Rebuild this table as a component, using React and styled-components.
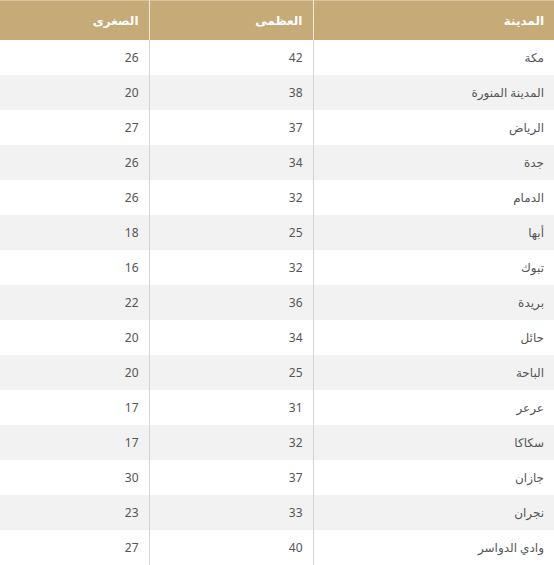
import React from "react";
import styled, { createGlobalStyle } from "styled-components";

const GlobalStyle = createGlobalStyle`
  html, body {
    margin: 0;
    padding: 0;
    background: #ffffff;
  }
  body {
    font-family: "Noto Sans", "DejaVu Sans", sans-serif;
  }
`;

const rows = [
  ["مكة", 42, 26],
  ["المدينة المنورة", 38, 20],
  ["الرياض", 37, 27],
  ["جدة", 34, 26],
  ["الدمام", 32, 26],
  ["أبها", 25, 18],
  ["تبوك", 32, 16],
  ["بريدة", 36, 22],
  ["حائل", 34, 20],
  ["الباحة", 25, 20],
  ["عرعر", 31, 17],
  ["سكاكا", 32, 17],
  ["جازان", 37, 30],
  ["نجران", 33, 23],
  ["وادي الدواسر", 40, 27],
];

const Table = styled.table`
  width: 554px;
  border-collapse: collapse;
  direction: rtl;
  table-layout: fixed;
`;

const HeadCell = styled.th`
  height: 40px;
  padding: 0 10px;
  background: #c6aa78;
  color: #ffffff;
  font-size: 12px;
  font-weight: 700;
  text-align: right;
  border-left: 1px solid #f3ead8;
  box-shadow: inset 0 1px 0 #d9c59f;
  &:last-child {
    border-left: none;
  }
`;

const Row = styled.tr`
  background: ${(p) => (p.$striped ? "#f2f2f2" : "#ffffff")};
`;

const Cell = styled.td`
  height: 35px;
  padding: 0 10px;
  color: #555555;
  font-size: 12px;
  text-align: right;
  border-left: 1px solid #d4d4d4;
  &:last-child {
    border-left: none;
  }
`;

export default function App() {
  return (
    <>
      <GlobalStyle />
      <Table>
        <colgroup>
          <col style={{ width: 241 }} />
          <col style={{ width: 164 }} />
          <col style={{ width: 149 }} />
        </colgroup>
        <thead>
          <tr>
            <HeadCell>المدينة</HeadCell>
            <HeadCell>العظمى</HeadCell>
            <HeadCell>الصغرى</HeadCell>
          </tr>
        </thead>
        <tbody>
          {rows.map(([city, max, min], i) => (
            <Row key={city} $striped={i % 2 === 1}>
              <Cell>{city}</Cell>
              <Cell>{max}</Cell>
              <Cell>{min}</Cell>
            </Row>
          ))}
        </tbody>
      </Table>
    </>
  );
}
